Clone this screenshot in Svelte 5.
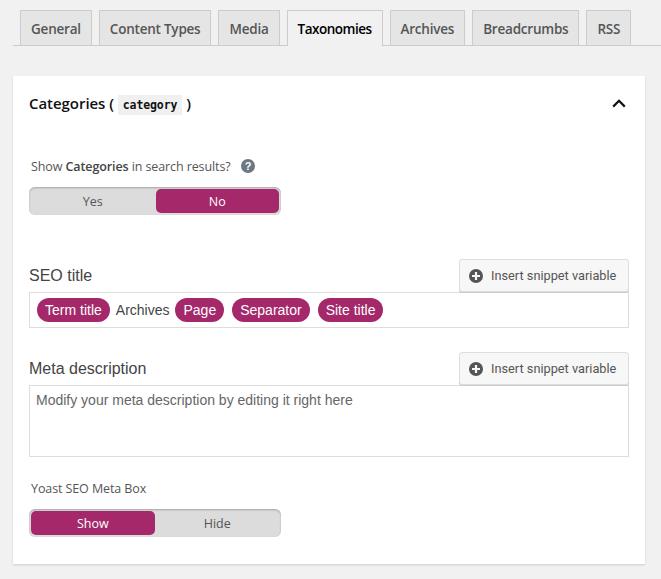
<script>
  const tabs = ['General', 'Content Types', 'Media', 'Taxonomies', 'Archives', 'Breadcrumbs', 'RSS'];
  const active = 'Taxonomies';
</script>

<div class="page">
  <nav class="tabs">
    {#each tabs as t}
      <span class="tab" class:active={t === active}>{t}</span>
    {/each}
  </nav>

  <section class="card">
    <header class="head">
      <h2>Categories ( <code>category</code> )</h2>
      <svg class="chev" width="14" height="9" viewBox="0 0 14 9"><path d="M1.2 7.6 7 1.8l5.8 5.8" fill="none" stroke="#111" stroke-width="2.2"/></svg>
    </header>

    <div class="ask">
      <span>Show <b>Categories</b> in search results?</span>
      <svg width="14" height="14" viewBox="0 0 14 14"><circle cx="7" cy="7" r="7" fill="#6c7781"/><text x="7" y="11" text-anchor="middle" class="q">?</text></svg>
    </div>
    <div class="toggle">
      <span class="opt">Yes</span>
      <span class="opt on">No</span>
    </div>

    <div class="field first">
      <div class="fhead">
        <span class="flabel">SEO title</span>
        <span class="btn">
          <svg width="14" height="14" viewBox="0 0 14 14"><circle cx="7" cy="7" r="7" fill="#555"/><path d="M7 3v8M3 7h8" stroke="#f7f7f7" stroke-width="2.2"/></svg>
          Insert snippet variable
        </span>
      </div>
      <div class="input">
        <span class="pill">Term title</span>
        <span class="plain">Archives</span>
        <span class="pill">Page</span>
        <span class="pill gap">Separator</span>
        <span class="pill gap">Site title</span>
      </div>
    </div>

    <div class="field second">
      <div class="fhead">
        <span class="flabel">Meta description</span>
        <span class="btn">
          <svg width="14" height="14" viewBox="0 0 14 14"><circle cx="7" cy="7" r="7" fill="#555"/><path d="M7 3v8M3 7h8" stroke="#f7f7f7" stroke-width="2.2"/></svg>
          Insert snippet variable
        </span>
      </div>
      <div class="area">Modify your meta description by editing it right here</div>
    </div>

    <div class="ask box">Yoast SEO Meta Box</div>
    <div class="toggle">
      <span class="opt on">Show</span>
      <span class="opt">Hide</span>
    </div>
  </section>
</div>

<style>
  :global(body) { margin: 0; background: #f1f1f1; }
  .page { width: 661px; height: 579px; overflow: hidden; background: #f1f1f1; font-family: "Open Sans", "Noto Sans", sans-serif; color: #444; padding-top: 10px; box-sizing: border-box; }
  .tabs { display: flex; gap: 7px; margin-left: 13px; padding-left: 7px; border-bottom: 1px solid #ccc; height: 35px; }
  .tab { box-sizing: border-box; height: 35px; padding: 0 10px; border: 1px solid #ccc; border-bottom: 0; background: #e5e5e5; color: #555; font-size: 13.5px; font-weight: 600; line-height: 36px; letter-spacing: -0.22px; }
  .tab.active { height: 36px; background: #f1f1f1; color: #000; letter-spacing: -0.5px; }
  .card { box-sizing: border-box; width: 632px; height: 488px; margin: 30px 0 0 13px; padding: 0 16px; background: #fff; box-shadow: 0 1px 2px rgba(0,0,0,.15); }
  .head { display: flex; justify-content: space-between; align-items: center; height: 55px; }
  h2 { margin: 0; font-size: 15px; font-weight: 600; color: #111; letter-spacing: -0.05px; }
  code { display: inline-block; padding: 0 5px; background: #f0f0f1; font-family: "DejaVu Sans Mono", monospace; font-size: 11.5px; font-weight: 600; line-height: 20px; letter-spacing: -0.1px; }
  .chev { margin-right: 3px; }
  .ask { display: flex; align-items: center; gap: 10px; margin: 26px 0 0 2px; height: 18px; font-size: 12.5px; letter-spacing: -0.1px; color: #555; }
  .ask b { font-weight: 600; color: #444; }
  .q { font: 700 11px "Liberation Sans", sans-serif; fill: #fff; }
  .toggle { display: flex; gap: 1px; box-sizing: border-box; width: 252px; height: 28px; margin-top: 12px; padding: 2px; background: #dcdcdc; border-radius: 6px; box-shadow: inset 0 1px 2px rgba(0,0,0,.25); }
  .opt { flex: 1; text-align: center; font-size: 12.5px; line-height: 25px; color: #555; border-radius: 5px; }
  .opt.on { background: #a4286a; color: #fff; }
  .field.first { margin-top: 44px; }
  .field.second { margin-top: 24px; }
  .fhead { display: flex; justify-content: space-between; align-items: center; height: 33px; }
  .flabel { font: 16px "Liberation Sans", Arial, sans-serif; color: #444; }
  .btn { display: flex; align-items: center; gap: 8px; box-sizing: border-box; width: 170px; height: 33px; padding-left: 9px; background: #f7f7f7; border: 1px solid #ddd; border-radius: 3px; box-shadow: 0 1px 0 #ccc; font: 12.75px Roboto, sans-serif; white-space: nowrap; color: #555; }
  .input { display: flex; align-items: center; box-sizing: border-box; height: 36px; padding-left: 7px; border: 1px solid #ddd; font: 14px "Liberation Sans", Arial, sans-serif; }
  .pill { padding: 0 8px; height: 24px; line-height: 24px; border-radius: 12px; background: #a4286a; color: #fff; }
  .plain { margin: 0 6px; color: #444; }
  .gap { margin-left: 8px; }
  .area { box-sizing: border-box; height: 72px; padding: 6px; border: 1px solid #ddd; font: 14px "Liberation Sans", Arial, sans-serif; color: #666; }
  .ask.box { margin-top: 22px; }
</style>
